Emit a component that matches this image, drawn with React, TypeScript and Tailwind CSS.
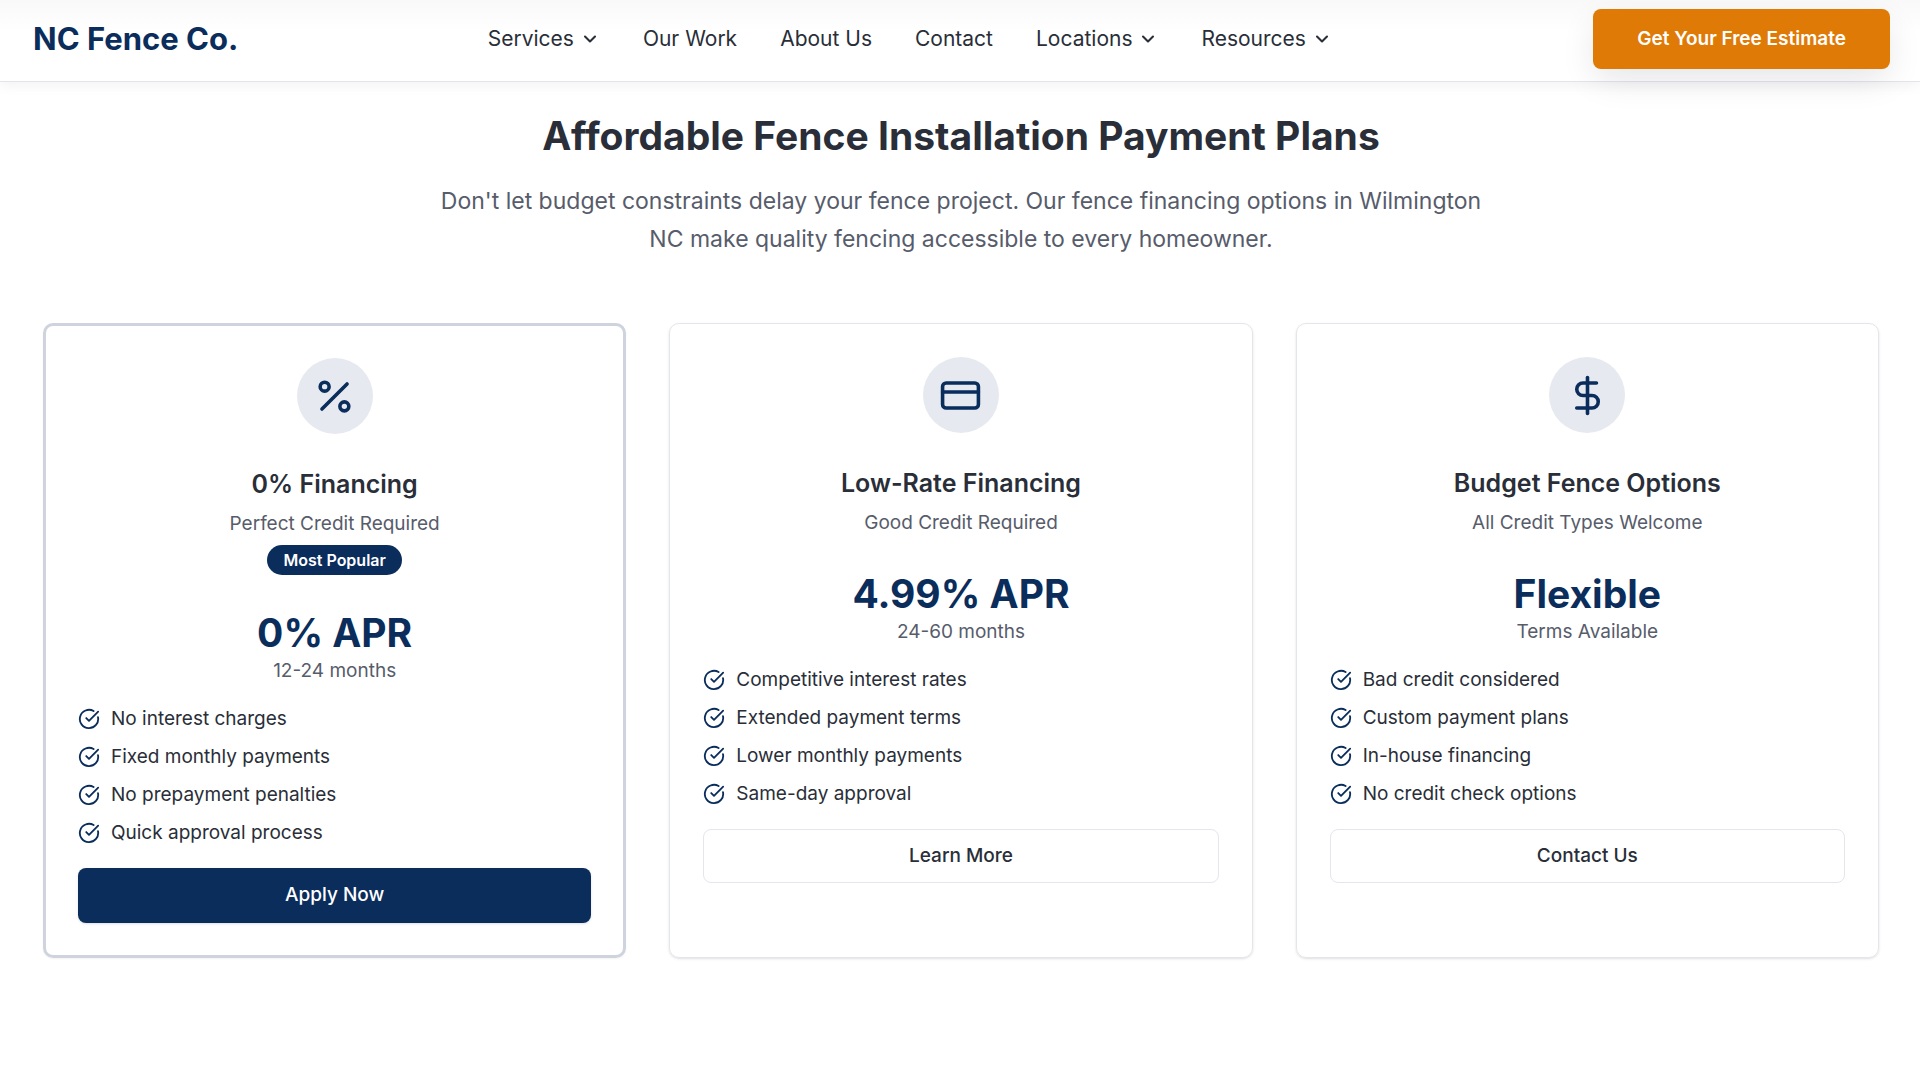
import { ChevronDown, CircleCheckBig, CreditCard, DollarSign, Percent, type LucideIcon } from "lucide-react";

type Plan = {
  icon: LucideIcon;
  title: string;
  credit: string;
  badge?: string;
  rate: string;
  term: string;
  features: string[];
  action: string;
  featured?: boolean;
};

const navItems = [
  { label: "Services", menu: true },
  { label: "Our Work", menu: false },
  { label: "About Us", menu: false },
  { label: "Contact", menu: false },
  { label: "Locations", menu: true },
  { label: "Resources", menu: true },
];

const plans: Plan[] = [
  {
    icon: Percent,
    title: "0% Financing",
    credit: "Perfect Credit Required",
    badge: "Most Popular",
    rate: "0% APR",
    term: "12-24 months",
    features: ["No interest charges", "Fixed monthly payments", "No prepayment penalties", "Quick approval process"],
    action: "Apply Now",
    featured: true,
  },
  {
    icon: CreditCard,
    title: "Low-Rate Financing",
    credit: "Good Credit Required",
    rate: "4.99% APR",
    term: "24-60 months",
    features: ["Competitive interest rates", "Extended payment terms", "Lower monthly payments", "Same-day approval"],
    action: "Learn More",
  },
  {
    icon: DollarSign,
    title: "Budget Fence Options",
    credit: "All Credit Types Welcome",
    rate: "Flexible",
    term: "Terms Available",
    features: ["Bad credit considered", "Custom payment plans", "In-house financing", "No credit check options"],
    action: "Contact Us",
  },
];

function Header() {
  return (
    <header className="flex items-center justify-between border-b border-[#e4e5ea] bg-linear-to-b from-[#f9f9f9] from-0% to-white to-40% pt-[9px] pr-[30px] pb-3 pl-[33px] shadow-[0_4px_12px_rgba(10,20,40,0.05)]">
      <a href="#" className="text-[31px] leading-10 font-bold text-[#0a2d5c]">
        NC Fence Co.
      </a>
      <nav className="flex items-center gap-[43px] pr-3 text-[21px] leading-7">
        {navItems.map((item) =>
          item.menu ? (
            <button key={item.label} type="button" className="flex items-center gap-1.5">
              {item.label}
              <ChevronDown size={20} strokeWidth={2.5} aria-hidden="true" />
            </button>
          ) : (
            <a key={item.label} href="#">
              {item.label}
            </a>
          ),
        )}
      </nav>
      <button
        type="button"
        className="h-[60px] rounded-lg bg-[#df7a07] px-11 text-[19px] font-semibold text-white shadow-[0_12px_36px_-4px_rgba(10,20,40,0.12)]"
      >
        Get Your Free Estimate
      </button>
    </header>
  );
}

function PlanCard({ plan }: { plan: Plan }) {
  const Icon = plan.icon;
  return (
    <article
      className={
        plan.featured
          ? "rounded-[10px] border-3 border-[#ced3de] p-8 shadow-xs"
          : "rounded-[10px] border border-[#e4e6eb] p-[33px] shadow-sm"
      }
    >
      <div className="flex flex-col items-center text-center">
        <div className="flex size-[76px] items-center justify-center rounded-full bg-[#e6e9f0] text-[#0a2d5c]">
          <Icon size={43} aria-hidden="true" />
        </div>
        <h3 className="mt-[31px] text-[25px] leading-[38px] font-semibold">{plan.title}</h3>
        <p className="mt-[7px] text-[19px] leading-7 text-[#575c6b]">{plan.credit}</p>
        {plan.badge && (
          <span className="mt-[7px] mb-px rounded-full bg-[#0a2d5c] px-4 text-[16px] leading-[30px] font-semibold text-white">
            {plan.badge}
          </span>
        )}
        <p className="mt-[33px] text-[39px] leading-[48px] font-bold text-[#0a2d5c]">{plan.rate}</p>
        <p className="text-[19px] leading-7 text-[#575c6b]">{plan.term}</p>
      </div>
      <ul className="mt-5 flex flex-col gap-2.5 text-[19px] leading-7">
        {plan.features.map((feature) => (
          <li key={feature} className="flex items-center gap-[11px]">
            <CircleCheckBig size={22} className="shrink-0 text-[#0a2d5c]" aria-hidden="true" />
            {feature}
          </li>
        ))}
      </ul>
      <button
        type="button"
        className={
          plan.featured
            ? "mt-[21px] h-[55px] w-full rounded-lg bg-[#0a2d5c] text-[19px] font-medium text-white shadow-sm"
            : "mt-[21px] h-[54px] w-full rounded-lg border border-[#e4e6eb] bg-white text-[19px] font-medium"
        }
      >
        {plan.action}
      </button>
    </article>
  );
}

export default function App() {
  return (
    <div className="min-h-screen bg-white font-['Inter',sans-serif] text-[#292e38]">
      <Header />
      <main className="pt-7 pr-[41px] pb-24 pl-[43px]">
        <div className="mx-auto max-w-[1060px] text-center">
          <h1 className="text-[39px] leading-[52px] font-bold">Affordable Fence Installation Payment Plans</h1>
          <p className="mt-5 text-[23px] leading-[38px] text-[#575c6b]">
            Don't let budget constraints delay your fence project. Our fence financing options in Wilmington NC make
            quality fencing accessible to every homeowner.
          </p>
        </div>
        <section aria-label="Financing plans" className="mt-[65px] grid grid-cols-3 gap-[43px]">
          {plans.map((plan) => (
            <PlanCard key={plan.title} plan={plan} />
          ))}
        </section>
      </main>
    </div>
  );
}
